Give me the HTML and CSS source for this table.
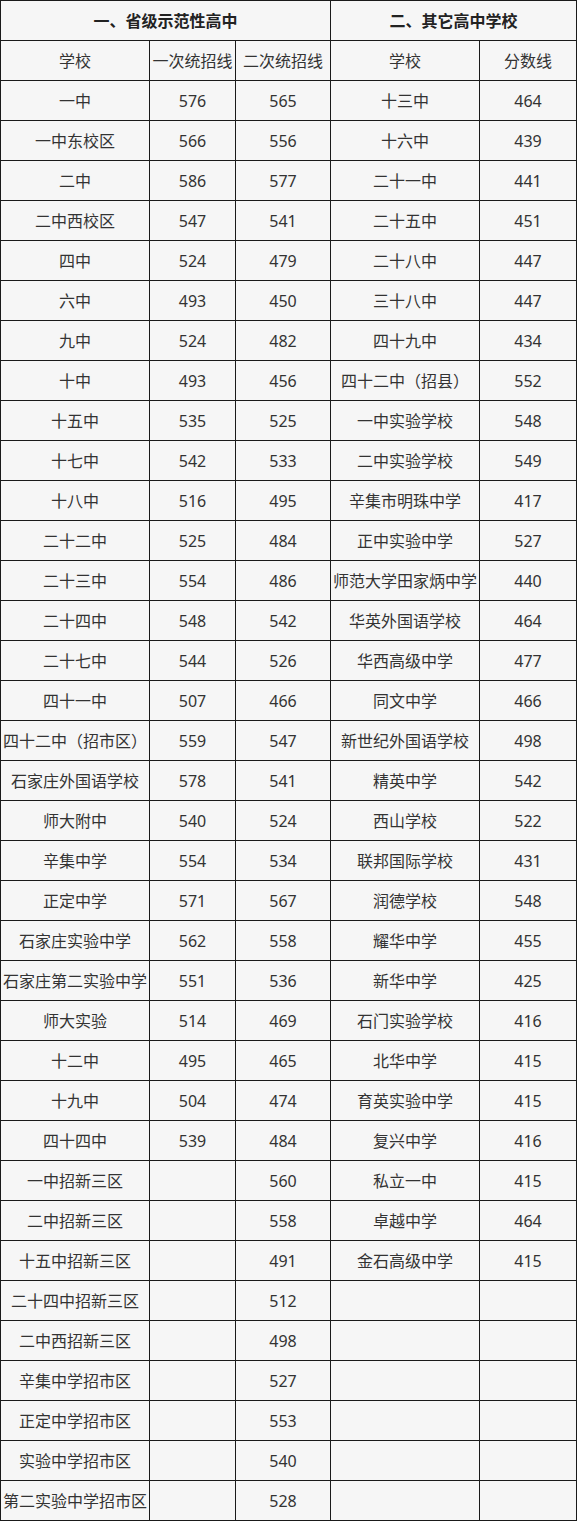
FILE: index.html
```html
<!DOCTYPE html>
<html lang="zh">
<head>
<meta charset="utf-8">
<title>分数线</title>
<link rel="stylesheet" href="styles.css">
</head>
<body>
<table class="score-table">
<colgroup>
<col class="c1"><col class="c2"><col class="c3"><col class="c4"><col class="c5">
</colgroup>
<thead>
<tr class="title"><th colspan="3">一、省级示范性高中</th><th colspan="2">二、其它高中学校</th></tr>
<tr><td>学校</td><td>一次统招线</td><td>二次统招线</td><td>学校</td><td>分数线</td></tr>
</thead>
<tbody>
<tr><td>一中</td><td>576</td><td>565</td><td>十三中</td><td>464</td></tr>
<tr><td>一中东校区</td><td>566</td><td>556</td><td>十六中</td><td>439</td></tr>
<tr><td>二中</td><td>586</td><td>577</td><td>二十一中</td><td>441</td></tr>
<tr><td>二中西校区</td><td>547</td><td>541</td><td>二十五中</td><td>451</td></tr>
<tr><td>四中</td><td>524</td><td>479</td><td>二十八中</td><td>447</td></tr>
<tr><td>六中</td><td>493</td><td>450</td><td>三十八中</td><td>447</td></tr>
<tr><td>九中</td><td>524</td><td>482</td><td>四十九中</td><td>434</td></tr>
<tr><td>十中</td><td>493</td><td>456</td><td>四十二中（招县）</td><td>552</td></tr>
<tr><td>十五中</td><td>535</td><td>525</td><td>一中实验学校</td><td>548</td></tr>
<tr><td>十七中</td><td>542</td><td>533</td><td>二中实验学校</td><td>549</td></tr>
<tr><td>十八中</td><td>516</td><td>495</td><td>辛集市明珠中学</td><td>417</td></tr>
<tr><td>二十二中</td><td>525</td><td>484</td><td>正中实验中学</td><td>527</td></tr>
<tr><td>二十三中</td><td>554</td><td>486</td><td>师范大学田家炳中学</td><td>440</td></tr>
<tr><td>二十四中</td><td>548</td><td>542</td><td>华英外国语学校</td><td>464</td></tr>
<tr><td>二十七中</td><td>544</td><td>526</td><td>华西高级中学</td><td>477</td></tr>
<tr><td>四十一中</td><td>507</td><td>466</td><td>同文中学</td><td>466</td></tr>
<tr><td>四十二中（招市区）</td><td>559</td><td>547</td><td>新世纪外国语学校</td><td>498</td></tr>
<tr><td>石家庄外国语学校</td><td>578</td><td>541</td><td>精英中学</td><td>542</td></tr>
<tr><td>师大附中</td><td>540</td><td>524</td><td>西山学校</td><td>522</td></tr>
<tr><td>辛集中学</td><td>554</td><td>534</td><td>联邦国际学校</td><td>431</td></tr>
<tr><td>正定中学</td><td>571</td><td>567</td><td>润德学校</td><td>548</td></tr>
<tr><td>石家庄实验中学</td><td>562</td><td>558</td><td>耀华中学</td><td>455</td></tr>
<tr><td>石家庄第二实验中学</td><td>551</td><td>536</td><td>新华中学</td><td>425</td></tr>
<tr><td>师大实验</td><td>514</td><td>469</td><td>石门实验学校</td><td>416</td></tr>
<tr><td>十二中</td><td>495</td><td>465</td><td>北华中学</td><td>415</td></tr>
<tr><td>十九中</td><td>504</td><td>474</td><td>育英实验中学</td><td>415</td></tr>
<tr><td>四十四中</td><td>539</td><td>484</td><td>复兴中学</td><td>416</td></tr>
<tr><td>一中招新三区</td><td></td><td>560</td><td>私立一中</td><td>415</td></tr>
<tr><td>二中招新三区</td><td></td><td>558</td><td>卓越中学</td><td>464</td></tr>
<tr><td>十五中招新三区</td><td></td><td>491</td><td>金石高级中学</td><td>415</td></tr>
<tr><td>二十四中招新三区</td><td></td><td>512</td><td></td><td></td></tr>
<tr><td>二中西招新三区</td><td></td><td>498</td><td></td><td></td></tr>
<tr><td>辛集中学招市区</td><td></td><td>527</td><td></td><td></td></tr>
<tr><td>正定中学招市区</td><td></td><td>553</td><td></td><td></td></tr>
<tr><td>实验中学招市区</td><td></td><td>540</td><td></td><td></td></tr>
<tr><td>第二实验中学招市区</td><td></td><td>528</td><td></td><td></td></tr>
</tbody>
</table>
</body>
</html>
```

FILE: styles.css
```css
html, body {
  margin: 0;
  padding: 0;
  background: #ffffff;
}

.score-table {
  border-collapse: collapse;
  table-layout: fixed;
  width: 577px;
  background: #f6f6f6;
  font-family: "Noto Sans", "Noto Sans CJK SC", sans-serif;
  font-size: 16px;
  color: #333333;
}

.c1 { width: 149px; }
.c2 { width: 86px; }
.c3 { width: 95px; }
.c4 { width: 149px; }
.c5 { width: 97px; }

.score-table tr {
  height: 40px;
}

.score-table th,
.score-table td {
  border: 1px solid #1a1a1a;
  padding: 0;
  text-align: center;
  vertical-align: middle;
  white-space: nowrap;
  overflow: hidden;
  line-height: 20px;
}

.score-table th {
  font-weight: bold;
  color: #222222;
}
```
